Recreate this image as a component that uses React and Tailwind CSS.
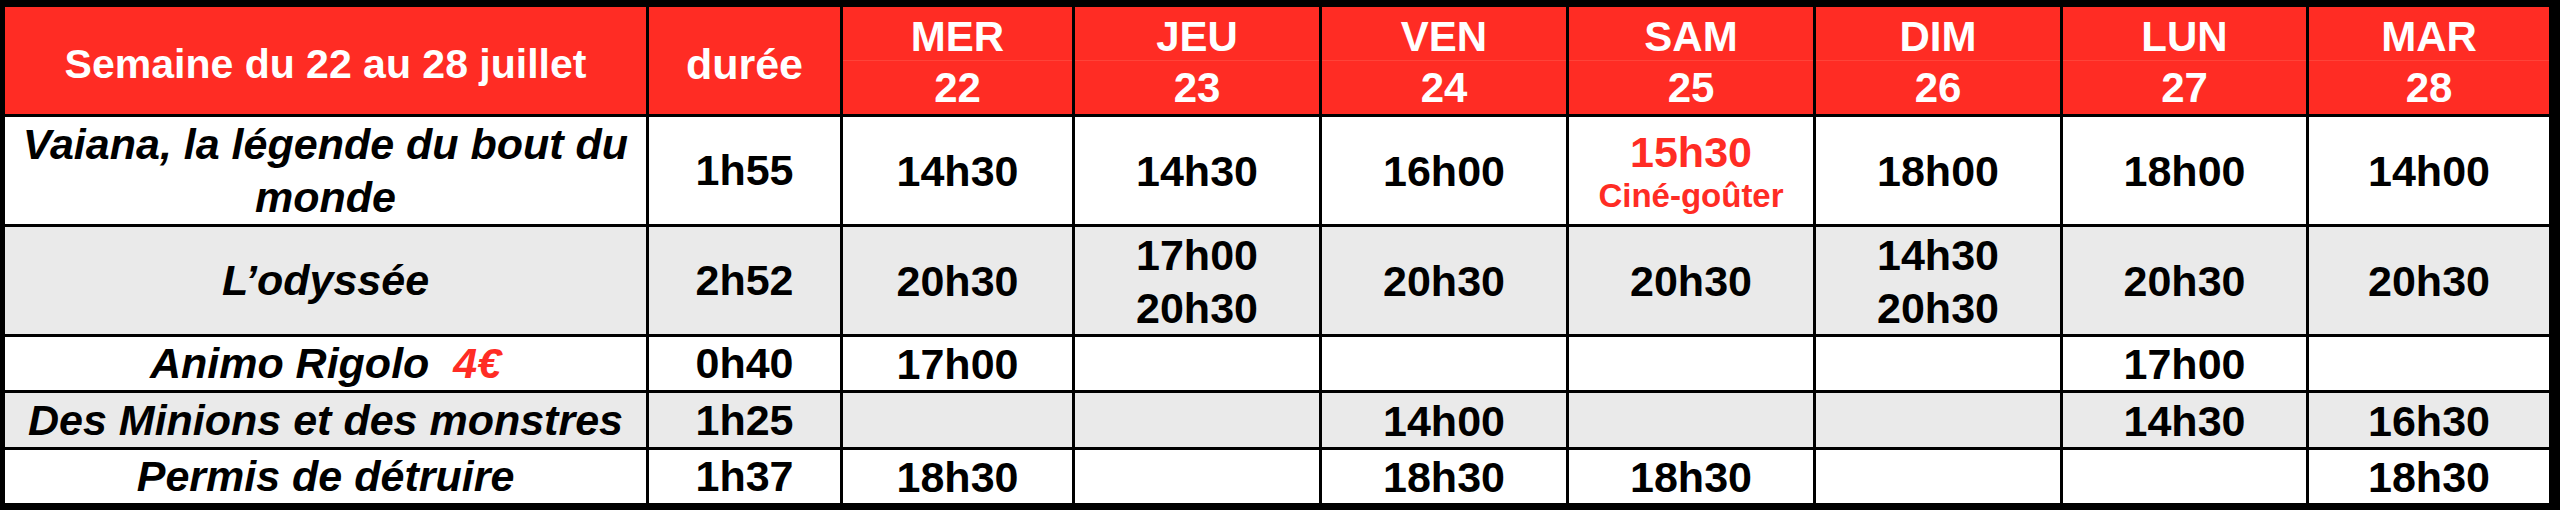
import React from 'react';

const DAYS = [
  ['MER', '22'],
  ['JEU', '23'],
  ['VEN', '24'],
  ['SAM', '25'],
  ['DIM', '26'],
  ['LUN', '27'],
  ['MAR', '28'],
];

// each entry in times = list of showings for that day
const FILMS = [
  {
    title: 'Vaiana, la légende du bout du monde',
    duration: '1h55',
    times: [['14h30'], ['14h30'], ['16h00'], 'gouter', ['18h00'], ['18h00'], ['14h00']],
  },
  {
    title: 'L’odyssée',
    duration: '2h52',
    gray: true,
    times: [['20h30'], ['17h00', '20h30'], ['20h30'], ['20h30'], ['14h30', '20h30'], ['20h30'], ['20h30']],
  },
  {
    title: 'Animo Rigolo',
    price: '4€',
    duration: '0h40',
    times: [['17h00'], [], [], [], [], ['17h00'], []],
  },
  {
    title: 'Des Minions et des monstres',
    duration: '1h25',
    gray: true,
    times: [[], [], ['14h00'], [], [], ['14h30'], ['16h30']],
  },
  {
    title: 'Permis de détruire',
    duration: '1h37',
    times: [['18h30'], [], ['18h30'], ['18h30'], [], [], ['18h30']],
  },
];

function Cell({ gray, children, className = '' }) {
  return (
    <div
      className={
        'flex flex-col items-center justify-center text-center ' +
        (gray ? 'bg-[#eaeaea] ' : 'bg-white ') +
        className
      }
    >
      {children}
    </div>
  );
}

export default function App() {
  return (
    <div className="w-[2560px] h-[510px] bg-black pt-[7px] pb-[7px] pl-[5px] pr-[11px] font-['Liberation_Sans',Arial,sans-serif] font-bold text-black">
      <div className="grid h-full grid-cols-[641px_191px_229px_244px_244px_244px_244px_243px_240px] grid-rows-[107px_107px_107px_53px_54px_53px] gap-[3px]">
        {/* header */}
        <div className="bg-[#ff2c24] text-white text-[41px] flex items-center justify-center pt-[8px]">
          Semaine du 22 au 28 juillet
        </div>
        <div className="bg-[#ff2c24] text-white text-[43px] flex items-center justify-center pt-[8px]">
          durée
        </div>
        {DAYS.map(([d, n]) => (
          <div key={d} className="bg-[#ff2c24] text-white text-[42px] flex flex-col">
            <div className="h-[54px] leading-[54px] pt-[3px] text-center border-b border-[#ff4339]">{d}</div>
            <div className="flex-1 leading-[52px] pt-[1px] text-center">{n}</div>
          </div>
        ))}

        {/* films */}
        {FILMS.map((f) => (
          <React.Fragment key={f.title}>
            <Cell gray={f.gray} className="italic text-[43px] leading-[53px] px-[10px]">
              <div>
                {f.title}
                {f.price && (
                  <span className="text-[#ff2c24]">
                    {'\u00a0\u00a0'}
                    {f.price}
                  </span>
                )}
              </div>
            </Cell>
            <Cell gray={f.gray} className="text-[43px] leading-[53px]">
              {f.duration}
            </Cell>
            {f.times.map((t, i) =>
              t === 'gouter' ? (
                <Cell key={i} gray={f.gray} className="text-[#ff2c24] pt-[2px]">
                  <div className="text-[43px] leading-[48px]">15h30</div>
                  <div className="text-[33px] leading-[40px]">Ciné-goûter</div>
                </Cell>
              ) : (
                <Cell key={i} gray={f.gray} className="text-[43px] leading-[53px] pt-[2px]">
                  {t.map((s) => (
                    <div key={s}>{s}</div>
                  ))}
                </Cell>
              )
            )}
          </React.Fragment>
        ))}
      </div>
    </div>
  );
}
